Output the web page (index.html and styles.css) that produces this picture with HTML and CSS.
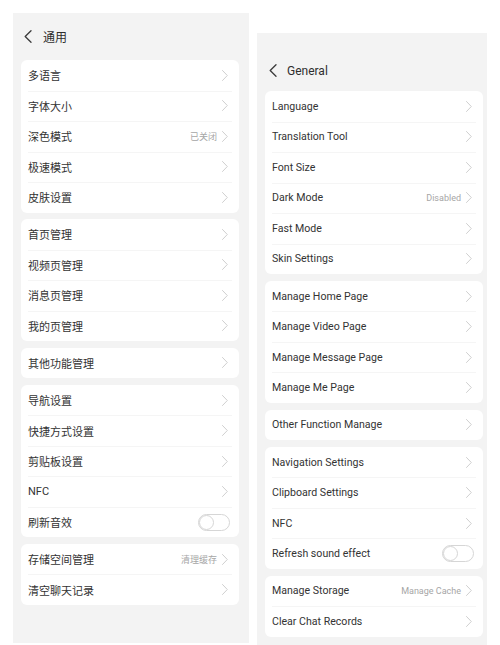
FILE: index.html
```html
<!DOCTYPE html>
<html lang="zh">
<head>
<meta charset="utf-8">
<link rel="stylesheet" href="styles.css">
</head>
<body>
<div class="page">
  <div class="panel panel-left">
    <div class="header">
      <svg class="back" viewBox="0 0 8 13" width="8" height="13"><polyline points="7,0.7 1.2,6.5 7,12.3"/></svg>
      <span class="title">通用</span>
    </div>
    <div class="card">
      <div class="row"><span class="label">多语言</span><svg class="chev" viewBox="0 0 6 11" width="6" height="11"><polyline points="0.5,0.5 5.3,5.5 0.5,10.5"/></svg></div>
      <div class="row"><span class="label">字体大小</span><svg class="chev" viewBox="0 0 6 11" width="6" height="11"><polyline points="0.5,0.5 5.3,5.5 0.5,10.5"/></svg></div>
      <div class="row"><span class="label">深色模式</span><span class="value">已关闭</span><svg class="chev" viewBox="0 0 6 11" width="6" height="11"><polyline points="0.5,0.5 5.3,5.5 0.5,10.5"/></svg></div>
      <div class="row"><span class="label">极速模式</span><svg class="chev" viewBox="0 0 6 11" width="6" height="11"><polyline points="0.5,0.5 5.3,5.5 0.5,10.5"/></svg></div>
      <div class="row"><span class="label">皮肤设置</span><svg class="chev" viewBox="0 0 6 11" width="6" height="11"><polyline points="0.5,0.5 5.3,5.5 0.5,10.5"/></svg></div>
    </div>
    <div class="card">
      <div class="row"><span class="label">首页管理</span><svg class="chev" viewBox="0 0 6 11" width="6" height="11"><polyline points="0.5,0.5 5.3,5.5 0.5,10.5"/></svg></div>
      <div class="row"><span class="label">视频页管理</span><svg class="chev" viewBox="0 0 6 11" width="6" height="11"><polyline points="0.5,0.5 5.3,5.5 0.5,10.5"/></svg></div>
      <div class="row"><span class="label">消息页管理</span><svg class="chev" viewBox="0 0 6 11" width="6" height="11"><polyline points="0.5,0.5 5.3,5.5 0.5,10.5"/></svg></div>
      <div class="row"><span class="label">我的页管理</span><svg class="chev" viewBox="0 0 6 11" width="6" height="11"><polyline points="0.5,0.5 5.3,5.5 0.5,10.5"/></svg></div>
    </div>
    <div class="card">
      <div class="row"><span class="label">其他功能管理</span><svg class="chev" viewBox="0 0 6 11" width="6" height="11"><polyline points="0.5,0.5 5.3,5.5 0.5,10.5"/></svg></div>
    </div>
    <div class="card">
      <div class="row"><span class="label">导航设置</span><svg class="chev" viewBox="0 0 6 11" width="6" height="11"><polyline points="0.5,0.5 5.3,5.5 0.5,10.5"/></svg></div>
      <div class="row"><span class="label">快捷方式设置</span><svg class="chev" viewBox="0 0 6 11" width="6" height="11"><polyline points="0.5,0.5 5.3,5.5 0.5,10.5"/></svg></div>
      <div class="row"><span class="label">剪贴板设置</span><svg class="chev" viewBox="0 0 6 11" width="6" height="11"><polyline points="0.5,0.5 5.3,5.5 0.5,10.5"/></svg></div>
      <div class="row"><span class="label">NFC</span><svg class="chev" viewBox="0 0 6 11" width="6" height="11"><polyline points="0.5,0.5 5.3,5.5 0.5,10.5"/></svg></div>
      <div class="row"><span class="label">刷新音效</span><span class="toggle"><span class="knob"></span></span></div>
    </div>
    <div class="card">
      <div class="row"><span class="label">存储空间管理</span><span class="value">清理缓存</span><svg class="chev" viewBox="0 0 6 11" width="6" height="11"><polyline points="0.5,0.5 5.3,5.5 0.5,10.5"/></svg></div>
      <div class="row"><span class="label">清空聊天记录</span><svg class="chev" viewBox="0 0 6 11" width="6" height="11"><polyline points="0.5,0.5 5.3,5.5 0.5,10.5"/></svg></div>
    </div>
  </div>
  <div class="panel panel-right">
    <div class="header">
      <svg class="back" viewBox="0 0 8 13" width="8" height="13"><polyline points="7,0.7 1.2,6.5 7,12.3"/></svg>
      <span class="title">General</span>
    </div>
    <div class="card">
      <div class="row"><span class="label">Language</span><svg class="chev" viewBox="0 0 6 11" width="6" height="11"><polyline points="0.5,0.5 5.3,5.5 0.5,10.5"/></svg></div>
      <div class="row"><span class="label">Translation Tool</span><svg class="chev" viewBox="0 0 6 11" width="6" height="11"><polyline points="0.5,0.5 5.3,5.5 0.5,10.5"/></svg></div>
      <div class="row"><span class="label">Font Size</span><svg class="chev" viewBox="0 0 6 11" width="6" height="11"><polyline points="0.5,0.5 5.3,5.5 0.5,10.5"/></svg></div>
      <div class="row"><span class="label">Dark Mode</span><span class="value">Disabled</span><svg class="chev" viewBox="0 0 6 11" width="6" height="11"><polyline points="0.5,0.5 5.3,5.5 0.5,10.5"/></svg></div>
      <div class="row"><span class="label">Fast Mode</span><svg class="chev" viewBox="0 0 6 11" width="6" height="11"><polyline points="0.5,0.5 5.3,5.5 0.5,10.5"/></svg></div>
      <div class="row"><span class="label">Skin Settings</span><svg class="chev" viewBox="0 0 6 11" width="6" height="11"><polyline points="0.5,0.5 5.3,5.5 0.5,10.5"/></svg></div>
    </div>
    <div class="card">
      <div class="row"><span class="label">Manage Home Page</span><svg class="chev" viewBox="0 0 6 11" width="6" height="11"><polyline points="0.5,0.5 5.3,5.5 0.5,10.5"/></svg></div>
      <div class="row"><span class="label">Manage Video Page</span><svg class="chev" viewBox="0 0 6 11" width="6" height="11"><polyline points="0.5,0.5 5.3,5.5 0.5,10.5"/></svg></div>
      <div class="row"><span class="label">Manage Message Page</span><svg class="chev" viewBox="0 0 6 11" width="6" height="11"><polyline points="0.5,0.5 5.3,5.5 0.5,10.5"/></svg></div>
      <div class="row"><span class="label">Manage Me Page</span><svg class="chev" viewBox="0 0 6 11" width="6" height="11"><polyline points="0.5,0.5 5.3,5.5 0.5,10.5"/></svg></div>
    </div>
    <div class="card">
      <div class="row"><span class="label">Other Function Manage</span><svg class="chev" viewBox="0 0 6 11" width="6" height="11"><polyline points="0.5,0.5 5.3,5.5 0.5,10.5"/></svg></div>
    </div>
    <div class="card">
      <div class="row"><span class="label">Navigation Settings</span><svg class="chev" viewBox="0 0 6 11" width="6" height="11"><polyline points="0.5,0.5 5.3,5.5 0.5,10.5"/></svg></div>
      <div class="row"><span class="label">Clipboard Settings</span><svg class="chev" viewBox="0 0 6 11" width="6" height="11"><polyline points="0.5,0.5 5.3,5.5 0.5,10.5"/></svg></div>
      <div class="row"><span class="label">NFC</span><svg class="chev" viewBox="0 0 6 11" width="6" height="11"><polyline points="0.5,0.5 5.3,5.5 0.5,10.5"/></svg></div>
      <div class="row"><span class="label">Refresh sound effect</span><span class="toggle"><span class="knob"></span></span></div>
    </div>
    <div class="card">
      <div class="row"><span class="label">Manage Storage</span><span class="value">Manage Cache</span><svg class="chev" viewBox="0 0 6 11" width="6" height="11"><polyline points="0.5,0.5 5.3,5.5 0.5,10.5"/></svg></div>
      <div class="row"><span class="label">Clear Chat Records</span><svg class="chev" viewBox="0 0 6 11" width="6" height="11"><polyline points="0.5,0.5 5.3,5.5 0.5,10.5"/></svg></div>
    </div>
  </div>
</div>
</body>
</html>
```
FILE: styles.css
```css
html, body {
  margin: 0;
  padding: 0;
  background: #ffffff;
}
body {
  width: 500px;
  height: 645px;
  overflow: hidden;
  font-family: Roboto, "Noto Sans CJK SC", "Noto Sans", sans-serif;
  color: #333333;
}
.page {
  display: flex;
  align-items: flex-start;
  height: 645px;
}
.panel {
  background: #f3f3f3;
  display: flex;
  flex-direction: column;
}
.panel-left {
  margin-left: 13px;
  margin-top: 13px;
  width: 236px;
  height: 630px;
  padding: 0 10px 0 8px;
  box-sizing: border-box;
  gap: 6.6px;
}
.panel-right {
  margin-left: 8px;
  margin-top: 33px;
  width: 230px;
  height: 612px;
  padding: 0 4px 0 8px;
  box-sizing: border-box;
  gap: 6.75px;
}
.header {
  display: flex;
  align-items: center;
  gap: 11px;
  height: 47px;
  margin-bottom: -6.6px;
  padding-left: 3px;
  box-sizing: border-box;
  flex-shrink: 0;
}
.panel-right .header {
  height: 58px;
  padding-left: 4px;
  padding-top: 17px;
  gap: 10px;
  margin-bottom: -6.75px;
}
.back polyline {
  fill: none;
  stroke: #3a3a3a;
  stroke-width: 1.3;
  stroke-linecap: round;
  stroke-linejoin: round;
}
.title {
  font-size: 12px;
  color: #2e2e2e;
}
.card {
  background: #ffffff;
  border-radius: 6px;
  display: flex;
  flex-direction: column;
  flex-shrink: 0;
}
.row {
  height: 30.5px;
  display: flex;
  align-items: center;
  padding: 0 11px 0 7px;
  position: relative;
  font-size: 11px;
}
.panel-right .row {
  font-size: 10.6px;
}
.row + .row::before {
  content: "";
  position: absolute;
  top: 0;
  left: 7px;
  right: 7px;
  height: 1px;
  background: #f5f5f5;
}
.label {
  flex: 1;
  color: #333333;
}
.value {
  font-size: 9px;
  color: #a6a6a6;
  margin-right: 5px;
}
.chev {
  display: block;
}
.chev polyline {
  fill: none;
  stroke: #cfcfcf;
  stroke-width: 1;
  stroke-linecap: round;
  stroke-linejoin: round;
}
.toggle {
  width: 32px;
  height: 17px;
  border: 1px solid #d6d6d6;
  border-radius: 9px;
  box-sizing: border-box;
  position: relative;
  margin-right: -2px;
}
.knob {
  position: absolute;
  left: 0;
  top: 0;
  width: 15px;
  height: 15px;
  border-radius: 50%;
  border: 1px solid #d6d6d6;
  box-sizing: border-box;
  background: #ffffff;
}
```
